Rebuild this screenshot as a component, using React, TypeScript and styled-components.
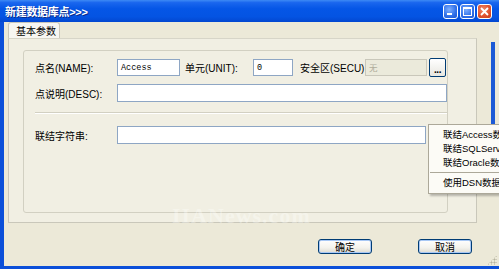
import React from "react"
import styled, { createGlobalStyle } from "styled-components"

const FONT = `"Liberation Sans", "Noto Sans CJK SC", sans-serif`

const GlobalStyle = createGlobalStyle`
  html, body {
    margin: 0;
    padding: 0;
    background: #ece9d8;
  }
  body {
    width: 499px;
    height: 269px;
    overflow: hidden;
    font-family: ${FONT};
  }
`

const Window = styled.div`
  position: relative;
  width: 499px;
  height: 269px;
  display: flex;
  flex-direction: column;
  overflow: hidden;
  font-family: ${FONT};
  font-size: 10px;
  color: #000;
`

const TitleBar = styled.div`
  height: 22px;
  flex: none;
  display: flex;
  align-items: center;
  padding: 0 7px 0 5px;
  background: linear-gradient(
    to bottom,
    #3d8af5 0%,
    #1a66ee 12%,
    #0556e6 40%,
    #0454e3 75%,
    #0347d0 100%
  );
`

const Title = styled.span`
  flex: 1;
  color: #fff;
  font-weight: bold;
  font-size: 11px;
  letter-spacing: -0.3px;
  text-shadow: 1px 1px 0 #0a2a8c;
`

const TitleButtons = styled.div`
  display: flex;
  gap: 2px;
`

const TitleButton = styled.div<{ $close?: boolean }>`
  width: 15px;
  height: 15px;
  box-sizing: border-box;
  border: 1px solid #fff;
  border-radius: 3px;
  display: flex;
  align-items: center;
  justify-content: center;
  background: ${p =>
    p.$close
      ? "radial-gradient(circle at 40% 35%, #f08a6a 0%, #e0532f 55%, #c43a18 100%)"
      : "radial-gradient(circle at 40% 35%, #7fb0ff 0%, #2f6fe8 60%, #1b55d0 100%)"};
`

const Body = styled.div`
  position: relative;
  flex: 1;
  display: flex;
  flex-direction: column;
  padding: 0 27px 0 4px;
  border-left: 4px solid #0b4fd9;
  border-bottom: 3px solid #0b4fd9;
  background: #ece9d8;
`

const TabStrip = styled.div`
  height: 16px;
  display: flex;
  align-items: flex-end;
`

const Tab = styled.div`
  width: 52px;
  height: 16px;
  box-sizing: border-box;
  padding: 2px 0 0 7px;
  border: 1px solid #c9c7ba;
  border-bottom: none;
  border-radius: 3px 3px 0 0;
  background: #f7f6f1;
  font-size: 10px;
  line-height: 14px;
`

const TabPage = styled.div`
  width: 469px;
  height: 185px;
  box-sizing: border-box;
  border: 1px solid #c9c7ba;
  border-top-color: #d7d5c8;
  background: #f1efe3;
  padding: 11px 0 0 14px;
`

const GroupBox = styled.div`
  width: 425px;
  height: 163px;
  box-sizing: border-box;
  border: 1px solid #d2d0c2;
  border-radius: 3px;
  padding: 7px 0 0 11px;
  display: flex;
  flex-direction: column;
`

const Row = styled.div<{ $gap?: number }>`
  display: flex;
  align-items: center;
  margin-top: ${p => p.$gap ?? 0}px;
`

const Label = styled.span<{ $w?: number; $ml?: number }>`
  width: ${p => (p.$w ? `${p.$w}px` : "auto")};
  margin-left: ${p => p.$ml ?? 0}px;
  flex: none;
  white-space: nowrap;
  font-size: 10px;
`

const Field = styled.div<{ $w: number; $h?: number; $disabled?: boolean; $ml?: number }>`
  width: ${p => p.$w}px;
  height: ${p => p.$h ?? 17}px;
  margin-left: ${p => p.$ml ?? 0}px;
  box-sizing: border-box;
  flex: none;
  border: 1px solid ${p => (p.$disabled ? "#c9c7ba" : "#8ea6c4")};
  background: ${p => (p.$disabled ? "#ebeadb" : "#fff")};
  color: ${p => (p.$disabled ? "#b0ad9c" : "#000")};
  padding: 0 3px;
  font-family: "Liberation Mono", "Noto Sans CJK SC", monospace;
  font-size: 8.5px;
  display: flex;
  align-items: center;
`

const Browse = styled.div`
  width: 17px;
  height: 19px;
  margin-left: 2px;
  box-sizing: border-box;
  border: 1px solid #003c74;
  border-radius: 2px;
  background: linear-gradient(to bottom, #fff, #e8e7e0);
  font-size: 10px;
  font-weight: bold;
  display: flex;
  align-items: flex-end;
  justify-content: center;
  line-height: 12px;
  letter-spacing: -0.5px;
`

const Separator = styled.div`
  width: 412px;
  height: 0;
  margin-top: 10px;
  border-top: 1px solid #d2d0c2;
  border-bottom: 1px solid #fff;
`

const ButtonRow = styled.div`
  display: flex;
  justify-content: flex-end;
  gap: 46px;
  margin-top: 16px;
`

const Button = styled.div`
  width: 54px;
  height: 15px;
  box-sizing: border-box;
  border: 1px solid #003c74;
  border-radius: 3px;
  background: linear-gradient(to bottom, #ffffff 0%, #f3f2ec 60%, #dcdad0 100%);
  box-shadow: inset 0 0 0 1px #a8c8f5;
  display: flex;
  align-items: center;
  justify-content: center;
  font-size: 10px;
`

const Watermark = styled.span`
  position: absolute;
  left: 168px;
  top: 181px;
  font-family: "Liberation Serif", serif;
  font-size: 22px;
  font-weight: bold;
  color: rgba(255, 255, 255, 0.32);
  letter-spacing: 1px;
  pointer-events: none;
`

// stray blue edge visible on the right of the capture
const EdgeStripe = styled.span`
  position: absolute;
  left: 487px;
  top: 20px;
  width: 4px;
  height: 84px;
  background: #1c5ad6;
`

const Grip = styled.span`
  position: absolute;
  right: 2px;
  bottom: 1px;
  width: 10px;
  height: 10px;
  background-image: radial-gradient(circle, #b6b3a0 45%, transparent 50%);
  background-size: 3px 3px;
  clip-path: polygon(100% 0, 100% 100%, 0 100%);
`

const Menu = styled.div`
  position: absolute;
  left: 428px;
  top: 124px;
  width: 100px;
  box-sizing: border-box;
  padding: 3px 0;
  background: #fcfbf6;
  border: 1px solid #aca899;
  box-shadow: 2px 2px 2px rgba(0, 0, 0, 0.25);
`

const MenuItem = styled.div`
  height: 14px;
  padding-left: 14px;
  font-size: 9.5px;
  line-height: 14px;
  white-space: nowrap;
`

const MenuSeparator = styled.div`
  height: 1px;
  margin: 2px 1px 3px;
  background: #aca899;
`

export default function App() {
  return (
    <Window>
      <GlobalStyle />
      <TitleBar>
        <Title>新建数据库点&gt;&gt;&gt;</Title>
        <TitleButtons>
          <TitleButton>
            <svg width="9" height="9" viewBox="0 0 9 9">
              <rect x="1" y="6" width="5" height="2" fill="#fff" />
            </svg>
          </TitleButton>
          <TitleButton>
            <svg width="9" height="9" viewBox="0 0 9 9">
              <rect x="0.5" y="0.5" width="8" height="8" fill="none" stroke="#fff" />
              <rect x="0" y="0" width="9" height="2" fill="#fff" />
            </svg>
          </TitleButton>
          <TitleButton $close>
            <svg width="9" height="9" viewBox="0 0 9 9">
              <path d="M1 1 L8 8 M8 1 L1 8" stroke="#fff" strokeWidth="1.8" />
            </svg>
          </TitleButton>
        </TitleButtons>
      </TitleBar>

      <Body>
        <TabStrip>
          <Tab>基本参数</Tab>
        </TabStrip>
        <TabPage>
          <GroupBox>
            <Row>
              <Label $w={82}>点名(NAME):</Label>
              <Field $w={63}>Access</Field>
              <Label $ml={5} $w={68}>单元(UNIT):</Label>
              <Field $w={40}>0</Field>
              <Label $ml={7} $w={65}>安全区(SECU)</Label>
              <Field $w={62} $disabled>
                无
              </Field>
              <Browse>...</Browse>
            </Row>
            <Row $gap={7}>
              <Label $w={82}>点说明(DESC):</Label>
              <Field $w={330} $h={18} />
            </Row>
            <Separator />
            <Row $gap={12}>
              <Label $w={82}>联结字符串:</Label>
              <Field $w={309} $h={18} />
            </Row>
          </GroupBox>
        </TabPage>
        <ButtonRow>
          <Button>确定</Button>
          <Button>取消</Button>
        </ButtonRow>
        <Watermark>IIANews.com</Watermark>
        <EdgeStripe />
        <Grip />
      </Body>

      <Menu>
        <MenuItem>联结Access数据库</MenuItem>
        <MenuItem>联结SQLServer数据库</MenuItem>
        <MenuItem>联结Oracle数据库</MenuItem>
        <MenuSeparator />
        <MenuItem>使用DSN数据源</MenuItem>
      </Menu>
    </Window>
  )
}
